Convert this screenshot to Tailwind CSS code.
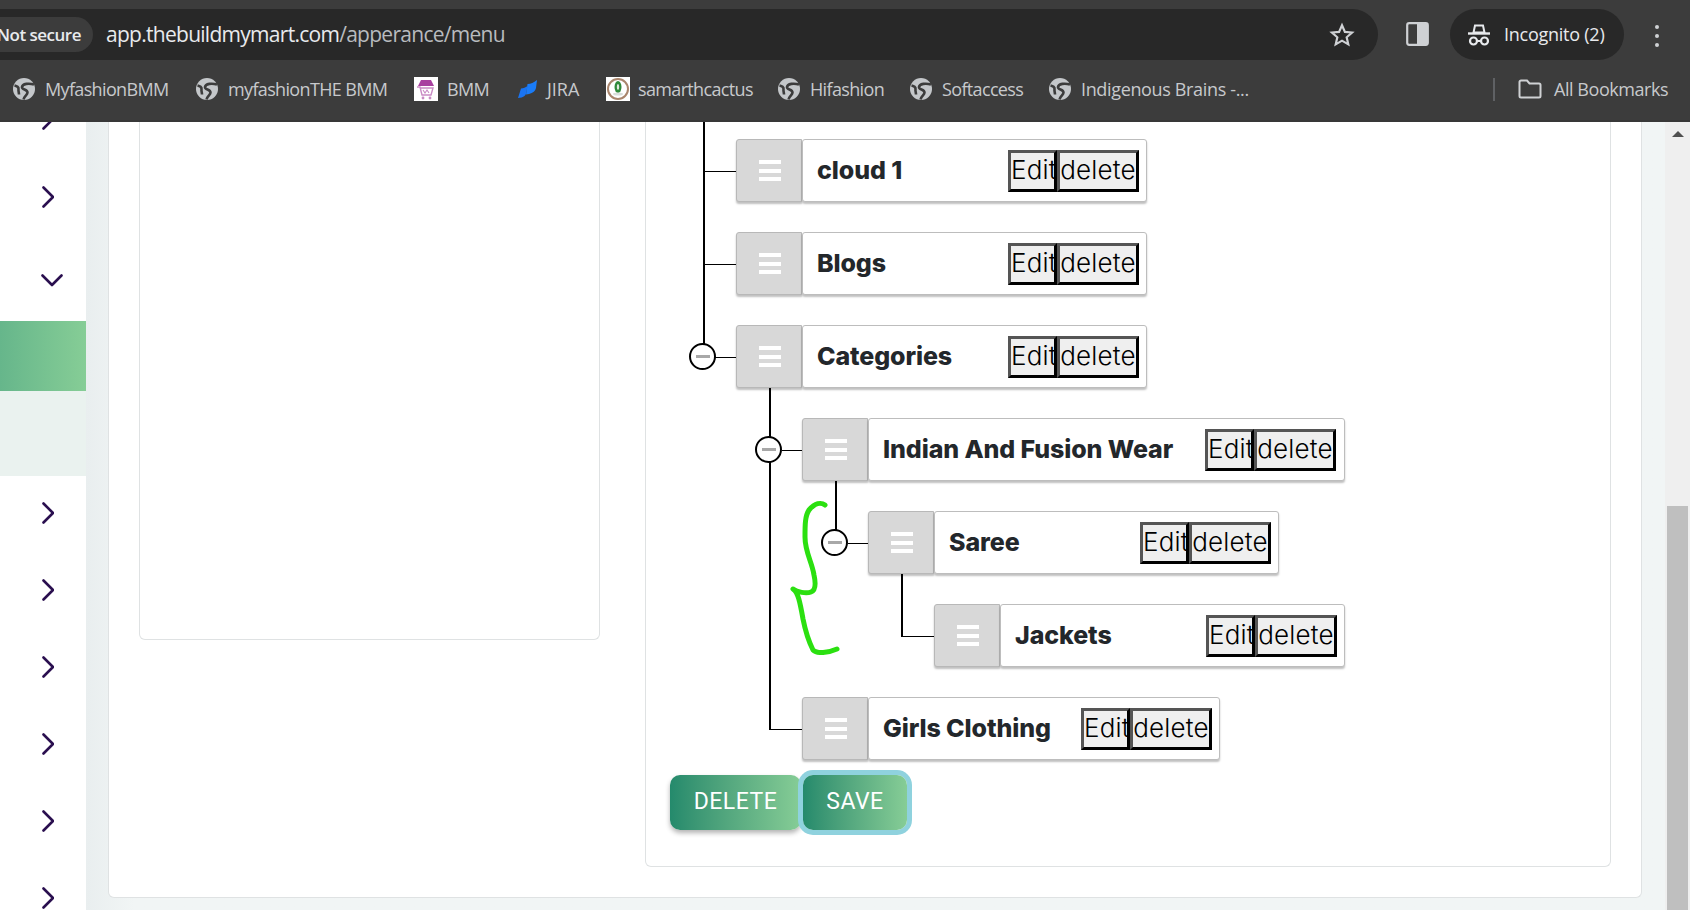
<!DOCTYPE html>
<html>
    <head>
        <meta charset="utf-8" />
        <title>Menu</title>
        <meta name="viewport" content="width=device-width, initial-scale=1.0">
        <script src="https://cdn.jsdelivr.net/npm/@tailwindcss/browser@4"></script>
    </head>
    <body class="h-[910px] w-[1690px] overflow-hidden bg-[#f0f4f4] font-['Inter',sans-serif]">
        <!-- browser chrome -->
        <header class="h-[122px] bg-[#3c3c3c] border-b-2 border-[#383838] font-['Open_Sans',sans-serif]">
            <div class="flex items-start pt-[9px] h-[60px]">
                <div class="flex items-center h-[51px] w-[1378px] bg-[#282828] rounded-r-full overflow-hidden">
                    <div class="flex items-center justify-end h-[35px] w-[93px] bg-[#3c3c3c] rounded-r-full pr-[12px] shrink-0">
                        <span class="text-[17px] font-semibold text-[#e8eaed] whitespace-nowrap tracking-[-0.5px]">Not secure</span>
                    </div>
                    <div class="ml-[13px] text-[21px] tracking-[-0.72px] text-[#e8eaed] whitespace-nowrap">app.thebuildmymart.com<span class="text-[#b8bbbf]">/apperance/menu</span></div>
                    <svg class="ml-auto mr-[23px] w-[26px] h-[26px]" viewBox="0 0 24 24" fill="none" stroke="#cfd1d4" stroke-width="2"><path d="M12 3l2.7 6.1 6.6.6-5 4.4 1.5 6.5L12 17.2l-5.8 3.4 1.5-6.5-5-4.4 6.6-.6z"/></svg>
                </div>
                <svg class="ml-[28px] mt-[13px] w-[23px] h-[24px]" viewBox="0 0 23 24"><rect x="1.2" y="1.2" width="20.6" height="21.6" rx="2" fill="none" stroke="#cfd1d4" stroke-width="2.2"/><rect x="11" y="1" width="11" height="22" rx="1" fill="#cfd1d4"/></svg>
                <div class="ml-[21px] flex items-center h-[51px] w-[174px] rounded-full bg-[#282828] pl-[17px]">
                    <svg class="w-[24px] h-[22px]" viewBox="0 0 24 22" fill="none" stroke="#e8eaed" stroke-width="2"><path d="M8 1.5h8l1.5 7h-11z"/><path d="M1 9.5h22" stroke-width="2.4"/><circle cx="6.5" cy="17" r="3.5" stroke-width="2.2"/><circle cx="17.5" cy="17" r="3.5" stroke-width="2.2"/><path d="M10 17h4"/></svg>
                    <span class="ml-[13px] text-[18px] text-[#e8eaed] tracking-[-0.25px] whitespace-nowrap">Incognito (2)</span>
                </div>
                <div class="ml-[31px] mt-[16px] flex flex-col gap-[5px]">
                    <span class="block w-[4px] h-[4px] rounded-full bg-[#cfd1d4]"></span>
                    <span class="block w-[4px] h-[4px] rounded-full bg-[#cfd1d4]"></span>
                    <span class="block w-[4px] h-[4px] rounded-full bg-[#cfd1d4]"></span>
                </div>
            </div>
            <div class="flex items-center h-[60px] pl-[13px] pb-[2px] text-[18px] tracking-[-0.65px] text-[#c7c9cc] whitespace-nowrap">
                <div class="flex items-center gap-[10px]">
                    <svg class="w-[22px] h-[22px]" viewBox="0 0 22 22" fill="none"><circle cx="11" cy="11" r="11" fill="#c4c7ca"/><path d="M21 6.500C16 5 9.500 5.500 9 9c-.4 3 5.500 2 5.500 5.500 0 2.500-3 3-4 7M1.500 7.500C4 8 6 9 5.500 11.500c-.3 1.500.5 3 .5 5" stroke="#3c3c3c" stroke-width="2.6"/></svg>
                    <span class="w-[124px]">MyfashionBMM</span>
                </div>
                <div class="flex items-center gap-[10px] ml-[27px]">
                    <svg class="w-[22px] h-[22px]" viewBox="0 0 22 22" fill="none"><circle cx="11" cy="11" r="11" fill="#c4c7ca"/><path d="M21 6.500C16 5 9.500 5.500 9 9c-.4 3 5.500 2 5.500 5.500 0 2.500-3 3-4 7M1.500 7.500C4 8 6 9 5.500 11.500c-.3 1.500.5 3 .5 5" stroke="#3c3c3c" stroke-width="2.6"/></svg>
                    <span class="w-[160px]">myfashionTHE BMM</span>
                </div>
                <div class="flex items-center gap-[9px] ml-[26px]">
                    <svg class="w-[24px] h-[24px]" viewBox="0 0 24 24"><rect width="24" height="24" fill="#fff"/><path d="M7 3h10l3 6H4z" fill="#a8409f"/><path d="M3 10l3 0 2 8h9l2-7H6" fill="none" stroke="#c98ac4" stroke-width="1.4"/><path d="M9 13l2 3 2-3 2 3" fill="none" stroke="#c98ac4" stroke-width="1.1"/><circle cx="9" cy="21" r="1.4" fill="#c98ac4"/><circle cx="16" cy="21" r="1.4" fill="#c98ac4"/></svg>
                    <span class="w-[42px]">BMM</span>
                </div>
                <div class="flex items-center gap-[10px] ml-[29px]">
                    <svg class="w-[19px] h-[18px]" viewBox="0 0 19 18"><path d="M9.500 4c3.500 0 6-1.500 9.500-4l-1 8c-.5 3-3 5-7 6l-3 .5z" fill="#1a7cf8"/><path d="M3 8.500c2.500 0 4.500-1 6.500-2.500L8.500 12c-.5 2-1 3-2 4-1.500 1-4 2-6.500 2z" fill="#1a74f2"/></svg>
                    <span class="w-[34px] tracking-[0px]">JIRA</span>
                </div>
                <div class="flex items-center gap-[8px] ml-[25px]">
                    <svg class="w-[24px] h-[24px]" viewBox="0 0 24 24"><rect width="24" height="24" fill="#fff"/><circle cx="12" cy="12" r="10" fill="none" stroke="#a9856c" stroke-width="2"/><ellipse cx="12" cy="10" rx="3.500" ry="6" fill="#2f8a3a"/><ellipse cx="12" cy="10" rx="1.200" ry="3" fill="#dfe8dc"/><ellipse cx="12" cy="17" rx="5" ry="1.500" fill="#d9dedb"/></svg>
                    <span class="w-[114px]">samarthcactus</span>
                </div>
                <div class="flex items-center gap-[10px] ml-[26px]">
                    <svg class="w-[22px] h-[22px]" viewBox="0 0 22 22" fill="none"><circle cx="11" cy="11" r="11" fill="#c4c7ca"/><path d="M21 6.500C16 5 9.500 5.500 9 9c-.4 3 5.500 2 5.500 5.500 0 2.500-3 3-4 7M1.500 7.500C4 8 6 9 5.500 11.500c-.3 1.500.5 3 .5 5" stroke="#3c3c3c" stroke-width="2.6"/></svg>
                    <span class="w-[75px]">Hifashion</span>
                </div>
                <div class="flex items-center gap-[10px] ml-[25px]">
                    <svg class="w-[22px] h-[22px]" viewBox="0 0 22 22" fill="none"><circle cx="11" cy="11" r="11" fill="#c4c7ca"/><path d="M21 6.500C16 5 9.500 5.500 9 9c-.4 3 5.500 2 5.500 5.500 0 2.500-3 3-4 7M1.500 7.500C4 8 6 9 5.500 11.500c-.3 1.500.5 3 .5 5" stroke="#3c3c3c" stroke-width="2.6"/></svg>
                    <span class="w-[82px]">Softaccess</span>
                </div>
                <div class="flex items-center gap-[10px] ml-[25px]">
                    <svg class="w-[22px] h-[22px]" viewBox="0 0 22 22" fill="none"><circle cx="11" cy="11" r="11" fill="#c4c7ca"/><path d="M21 6.500C16 5 9.500 5.500 9 9c-.4 3 5.500 2 5.500 5.500 0 2.500-3 3-4 7M1.500 7.500C4 8 6 9 5.500 11.500c-.3 1.500.5 3 .5 5" stroke="#3c3c3c" stroke-width="2.6"/></svg>
                    <span class="w-[167px] tracking-[-0.35px]">Indigenous Brains -...</span>
                </div>
                <div class="ml-[245px] w-[2px] h-[23px] bg-[#5f6164]"></div>
                <svg class="ml-[23px] w-[24px] h-[20px]" viewBox="0 0 24 20" fill="none" stroke="#cfd1d4" stroke-width="2"><path d="M1.500 3a1.500 1.500 0 011.500-1.500h6l2.500 3H21a1.500 1.500 0 011.500 1.500v11a1.500 1.500 0 01-1.500 1.500H3A1.500 1.500 0 011.500 17z"/></svg>
                <span class="ml-[12px] tracking-[-0.45px]">All Bookmarks</span>
            </div>
        </header>

        <main class="flex h-[788px] overflow-hidden">
            <!-- sidebar -->
            <aside class="w-[86px] shrink-0 bg-white flex flex-col text-[#2a0f4f] overflow-hidden">
                <div class="h-[199px] relative">
                    <svg class="absolute left-[42px] top-[-14px] w-[12px] h-[22px]" viewBox="0 0 12 22" fill="none" stroke="currentColor" stroke-width="2.6" stroke-linecap="round" stroke-linejoin="round"><path d="M1.500 1.500l9.500 9.500-9.500 9.500"/></svg>
                    <svg class="absolute left-[42px] top-[64px] w-[12px] h-[22px]" viewBox="0 0 12 22" fill="none" stroke="currentColor" stroke-width="2.6" stroke-linecap="round" stroke-linejoin="round"><path d="M1.500 1.500l9.500 9.500-9.500 9.500"/></svg>
                    <svg class="absolute left-[41px] top-[152px] w-[22px] h-[13px]" viewBox="0 0 22 13" fill="none" stroke="currentColor" stroke-width="2.6" stroke-linecap="round" stroke-linejoin="round"><path d="M1.500 1.500l9.500 9.500 9.500-9.500"/></svg>
                </div>
                <div class="h-[70px] bg-gradient-to-r from-[#66b68b] to-[#86cd96]"></div>
                <div class="h-[85px] bg-[#eaf2ef]"></div>
                <div class="flex-1 pt-[26px] flex flex-col gap-[55px] pl-[42px]">
                    <svg class="w-[12px] h-[22px] shrink-0" viewBox="0 0 12 22" fill="none" stroke="currentColor" stroke-width="2.6" stroke-linecap="round" stroke-linejoin="round"><path d="M1.500 1.500l9.500 9.500-9.500 9.500"/></svg>
                    <svg class="w-[12px] h-[22px] shrink-0" viewBox="0 0 12 22" fill="none" stroke="currentColor" stroke-width="2.6" stroke-linecap="round" stroke-linejoin="round"><path d="M1.500 1.500l9.500 9.500-9.500 9.500"/></svg>
                    <svg class="w-[12px] h-[22px] shrink-0" viewBox="0 0 12 22" fill="none" stroke="currentColor" stroke-width="2.6" stroke-linecap="round" stroke-linejoin="round"><path d="M1.500 1.500l9.500 9.500-9.500 9.500"/></svg>
                    <svg class="w-[12px] h-[22px] shrink-0" viewBox="0 0 12 22" fill="none" stroke="currentColor" stroke-width="2.6" stroke-linecap="round" stroke-linejoin="round"><path d="M1.500 1.500l9.500 9.500-9.500 9.500"/></svg>
                    <svg class="w-[12px] h-[22px] shrink-0" viewBox="0 0 12 22" fill="none" stroke="currentColor" stroke-width="2.6" stroke-linecap="round" stroke-linejoin="round"><path d="M1.500 1.500l9.500 9.500-9.500 9.500"/></svg>
                    <svg class="w-[12px] h-[22px] shrink-0" viewBox="0 0 12 22" fill="none" stroke="currentColor" stroke-width="2.6" stroke-linecap="round" stroke-linejoin="round"><path d="M1.500 1.500l9.500 9.500-9.500 9.500"/></svg>
                </div>
            </aside>

            <!-- page -->
            <div class="flex-1 flex bg-gradient-to-r from-[#e9eeef] to-[#f1f5f5] to-[3%]">
                <div class="ml-[22px] w-[1534px] h-[776px] bg-white border-x border-b border-[#dfe2e3] rounded-b-md flex items-start pl-[30px]">
                    <div class="w-[461px] h-[518px] border-x border-b border-[#dfe2e3] rounded-b-md"></div>
                    <div class="relative ml-[45px] w-[966px] h-[745px] border-x border-b border-[#dfe2e3] rounded-b-md pt-[17px] pl-[90px]">
                        <!-- level 1 -->
                        <div class="relative flex h-[63px] w-[411px]">
                            <span class="absolute left-[-33px] top-[-17px] w-[2px] h-[222px] bg-black"></span>
                            <span class="absolute left-[-31px] top-[32px] w-[31px] h-px bg-black"></span>
                            <div class="w-[66px] shrink-0 bg-[#d8d8d8] border border-[#b8b8b8] rounded-l-[3px] shadow-[0_2px_2px_rgba(0,0,0,0.25)] flex flex-col items-center justify-center gap-[4.5px] pl-[2px]"><span class="w-[22px] h-[4px] bg-white"></span><span class="w-[22px] h-[4px] bg-white"></span><span class="w-[22px] h-[4px] bg-white"></span></div>
                            <div class="flex-1 flex items-center justify-between bg-white border border-[#bdbdbd] rounded-[3px] shadow-[0_2px_2px_rgba(0,0,0,0.25)] pl-[14px] pr-[7px]">
                                <span class="text-[25px] font-extrabold text-[#23272b] tracking-[-0.1px]">cloud 1</span>
                                <div class="flex text-[26px] font-light text-black leading-none tracking-[0.2px]"><button class="w-[49px] h-[42px] pb-[2px] bg-[#efefef] border-[3px] border-t-[#555] border-l-[#555] border-r-black border-b-black">Edit</button><button class="w-[82px] h-[42px] pb-[2px] bg-[#efefef] border-[3px] border-t-[#555] border-l-[#555] border-r-black border-b-black">delete</button></div>
                            </div>
                        </div>
                        <div class="relative flex h-[63px] w-[411px] mt-[30px]">
                            <span class="absolute left-[-31px] top-[32px] w-[31px] h-px bg-black"></span>
                            <div class="w-[66px] shrink-0 bg-[#d8d8d8] border border-[#b8b8b8] rounded-l-[3px] shadow-[0_2px_2px_rgba(0,0,0,0.25)] flex flex-col items-center justify-center gap-[4.5px] pl-[2px]"><span class="w-[22px] h-[4px] bg-white"></span><span class="w-[22px] h-[4px] bg-white"></span><span class="w-[22px] h-[4px] bg-white"></span></div>
                            <div class="flex-1 flex items-center justify-between bg-white border border-[#bdbdbd] rounded-[3px] shadow-[0_2px_2px_rgba(0,0,0,0.25)] pl-[14px] pr-[7px]">
                                <span class="text-[25px] font-extrabold text-[#23272b] tracking-[-0.1px]">Blogs</span>
                                <div class="flex text-[26px] font-light text-black leading-none tracking-[0.2px]"><button class="w-[49px] h-[42px] pb-[2px] bg-[#efefef] border-[3px] border-t-[#555] border-l-[#555] border-r-black border-b-black">Edit</button><button class="w-[82px] h-[42px] pb-[2px] bg-[#efefef] border-[3px] border-t-[#555] border-l-[#555] border-r-black border-b-black">delete</button></div>
                            </div>
                        </div>
                        <div class="relative flex h-[63px] w-[411px] mt-[30px]">
                            <span class="absolute left-[-31px] top-[32px] w-[31px] h-px bg-black"></span>
                            <span class="absolute left-[-47px] top-[18px] w-[27px] h-[27px] rounded-full border-2 border-black bg-white flex items-center justify-center"><span class="w-[14px] h-[3px] bg-[#a8a8a8]"></span></span>
                            <span class="absolute left-[33px] top-[63px] w-[2px] h-[30px] bg-black"></span>
                            <div class="w-[66px] shrink-0 bg-[#d8d8d8] border border-[#b8b8b8] rounded-l-[3px] shadow-[0_2px_2px_rgba(0,0,0,0.25)] flex flex-col items-center justify-center gap-[4.5px] pl-[2px]"><span class="w-[22px] h-[4px] bg-white"></span><span class="w-[22px] h-[4px] bg-white"></span><span class="w-[22px] h-[4px] bg-white"></span></div>
                            <div class="flex-1 flex items-center justify-between bg-white border border-[#bdbdbd] rounded-[3px] shadow-[0_2px_2px_rgba(0,0,0,0.25)] pl-[14px] pr-[7px]">
                                <span class="text-[25px] font-extrabold text-[#23272b] tracking-[-0.1px]">Categories</span>
                                <div class="flex text-[26px] font-light text-black leading-none tracking-[0.2px]"><button class="w-[49px] h-[42px] pb-[2px] bg-[#efefef] border-[3px] border-t-[#555] border-l-[#555] border-r-black border-b-black">Edit</button><button class="w-[82px] h-[42px] pb-[2px] bg-[#efefef] border-[3px] border-t-[#555] border-l-[#555] border-r-black border-b-black">delete</button></div>
                            </div>
                        </div>
                        <!-- level 2 -->
                        <div class="relative flex h-[63px] w-[543px] ml-[66px] mt-[30px]">
                            <span class="absolute left-[-33px] top-[-30px] w-[2px] h-[342px] bg-black"></span>
                            <span class="absolute left-[-20px] top-[32px] w-[20px] h-px bg-black"></span>
                            <span class="absolute left-[-47px] top-[18px] w-[27px] h-[27px] rounded-full border-2 border-black bg-white flex items-center justify-center"><span class="w-[14px] h-[3px] bg-[#a8a8a8]"></span></span>
                            <span class="absolute left-[33px] top-[63px] w-[2px] h-[50px] bg-black"></span>
                            <div class="w-[66px] shrink-0 bg-[#d8d8d8] border border-[#b8b8b8] rounded-l-[3px] shadow-[0_2px_2px_rgba(0,0,0,0.25)] flex flex-col items-center justify-center gap-[4.5px] pl-[2px]"><span class="w-[22px] h-[4px] bg-white"></span><span class="w-[22px] h-[4px] bg-white"></span><span class="w-[22px] h-[4px] bg-white"></span></div>
                            <div class="flex-1 flex items-center justify-between bg-white border border-[#bdbdbd] rounded-[3px] shadow-[0_2px_2px_rgba(0,0,0,0.25)] pl-[14px] pr-[8px]">
                                <span class="text-[25px] font-extrabold text-[#23272b] tracking-[-0.1px]">Indian And Fusion Wear</span>
                                <div class="flex text-[26px] font-light text-black leading-none tracking-[0.2px]"><button class="w-[49px] h-[42px] pb-[2px] bg-[#efefef] border-[3px] border-t-[#555] border-l-[#555] border-r-black border-b-black">Edit</button><button class="w-[82px] h-[42px] pb-[2px] bg-[#efefef] border-[3px] border-t-[#555] border-l-[#555] border-r-black border-b-black">delete</button></div>
                            </div>
                        </div>
                        <!-- level 3 -->
                        <div class="relative flex h-[63px] w-[411px] ml-[132px] mt-[30px]">
                            <span class="absolute left-[-20px] top-[32px] w-[20px] h-px bg-black"></span>
                            <span class="absolute left-[-47px] top-[18px] w-[27px] h-[27px] rounded-full border-2 border-black bg-white flex items-center justify-center"><span class="w-[14px] h-[3px] bg-[#a8a8a8]"></span></span>
                            <span class="absolute left-[33px] top-[63px] w-[2px] h-[62px] bg-black"></span>
                            <div class="w-[66px] shrink-0 bg-[#d8d8d8] border border-[#b8b8b8] rounded-l-[3px] shadow-[0_2px_2px_rgba(0,0,0,0.25)] flex flex-col items-center justify-center gap-[4.5px] pl-[2px]"><span class="w-[22px] h-[4px] bg-white"></span><span class="w-[22px] h-[4px] bg-white"></span><span class="w-[22px] h-[4px] bg-white"></span></div>
                            <div class="flex-1 flex items-center justify-between bg-white border border-[#bdbdbd] rounded-[3px] shadow-[0_2px_2px_rgba(0,0,0,0.25)] pl-[14px] pr-[7px]">
                                <span class="text-[25px] font-extrabold text-[#23272b] tracking-[-0.1px]">Saree</span>
                                <div class="flex text-[26px] font-light text-black leading-none tracking-[0.2px]"><button class="w-[49px] h-[42px] pb-[2px] bg-[#efefef] border-[3px] border-t-[#555] border-l-[#555] border-r-black border-b-black">Edit</button><button class="w-[82px] h-[42px] pb-[2px] bg-[#efefef] border-[3px] border-t-[#555] border-l-[#555] border-r-black border-b-black">delete</button></div>
                            </div>
                        </div>
                        <!-- level 4 -->
                        <div class="relative flex h-[63px] w-[411px] ml-[198px] mt-[30px]">
                            <span class="absolute left-[-33px] top-[32px] w-[33px] h-px bg-black"></span>
                            <div class="w-[66px] shrink-0 bg-[#d8d8d8] border border-[#b8b8b8] rounded-l-[3px] shadow-[0_2px_2px_rgba(0,0,0,0.25)] flex flex-col items-center justify-center gap-[4.5px] pl-[2px]"><span class="w-[22px] h-[4px] bg-white"></span><span class="w-[22px] h-[4px] bg-white"></span><span class="w-[22px] h-[4px] bg-white"></span></div>
                            <div class="flex-1 flex items-center justify-between bg-white border border-[#bdbdbd] rounded-[3px] shadow-[0_2px_2px_rgba(0,0,0,0.25)] pl-[14px] pr-[7px]">
                                <span class="text-[25px] font-extrabold text-[#23272b] tracking-[-0.1px]">Jackets</span>
                                <div class="flex text-[26px] font-light text-black leading-none tracking-[0.2px]"><button class="w-[49px] h-[42px] pb-[2px] bg-[#efefef] border-[3px] border-t-[#555] border-l-[#555] border-r-black border-b-black">Edit</button><button class="w-[82px] h-[42px] pb-[2px] bg-[#efefef] border-[3px] border-t-[#555] border-l-[#555] border-r-black border-b-black">delete</button></div>
                            </div>
                        </div>
                        <!-- level 2 -->
                        <div class="relative flex h-[63px] w-[418px] ml-[66px] mt-[30px]">
                            <span class="absolute left-[-33px] top-[32px] w-[33px] h-px bg-black"></span>
                            <div class="w-[66px] shrink-0 bg-[#d8d8d8] border border-[#b8b8b8] rounded-l-[3px] shadow-[0_2px_2px_rgba(0,0,0,0.25)] flex flex-col items-center justify-center gap-[4.5px] pl-[2px]"><span class="w-[22px] h-[4px] bg-white"></span><span class="w-[22px] h-[4px] bg-white"></span><span class="w-[22px] h-[4px] bg-white"></span></div>
                            <div class="flex-1 flex items-center justify-between bg-white border border-[#bdbdbd] rounded-[3px] shadow-[0_2px_2px_rgba(0,0,0,0.25)] pl-[14px] pr-[7px]">
                                <span class="text-[25px] font-extrabold text-[#23272b] tracking-[-0.1px]">Girls Clothing</span>
                                <div class="flex text-[26px] font-light text-black leading-none tracking-[0.2px]"><button class="w-[49px] h-[42px] pb-[2px] bg-[#efefef] border-[3px] border-t-[#555] border-l-[#555] border-r-black border-b-black">Edit</button><button class="w-[82px] h-[42px] pb-[2px] bg-[#efefef] border-[3px] border-t-[#555] border-l-[#555] border-r-black border-b-black">delete</button></div>
                            </div>
                        </div>
                        <!-- actions -->
                        <div class="flex mt-[15px] -ml-[66px] gap-[2px] font-['Roboto',sans-serif] text-[23px] tracking-[0.5px] text-white">
                            <button class="w-[131px] h-[55px] rounded-[10px] bg-gradient-to-r from-[#248a6c] to-[#86cd96] shadow-[0_3px_5px_rgba(0,0,0,0.3)]">DELETE</button>
                            <button class="w-[104px] h-[55px] rounded-[10px] bg-gradient-to-r from-[#248a6c] to-[#86cd96] ring-[5px] ring-[#8fd2de]">SAVE</button>
                        </div>
                        <!-- hand drawn brace, lies over the tree -->
                        <svg class="absolute left-[144px] top-[378px] w-[50px] h-[155px]" viewBox="790 498 50 155" fill="none" stroke="#2be010" stroke-width="5" stroke-linecap="round" stroke-linejoin="round"><path d="M825 503C821 500 815 501 809 508C805 514 805 523 805 535C805 550 812 560 814 573C816 582 816 588 811 590C806 592 797 590 793 587C798 590 800 600 803 617C806 632 810 642 813 648C817 652 828 651 837 647"/></svg>
                    </div>
                </div>
                <!-- scrollbar -->
                <div class="ml-[23px] w-[25px] h-[788px] bg-[#efefef] flex flex-col items-center">
                    <div class="h-[384px] pt-[9px]"><div class="w-0 h-0 border-x-[6px] border-x-transparent border-b-[6px] border-b-[#505050]"></div></div>
                    <div class="w-[21px] h-[404px] bg-[#bfbfbf]"></div>
                </div>
            </div>
        </main>
    </body>
</html>
